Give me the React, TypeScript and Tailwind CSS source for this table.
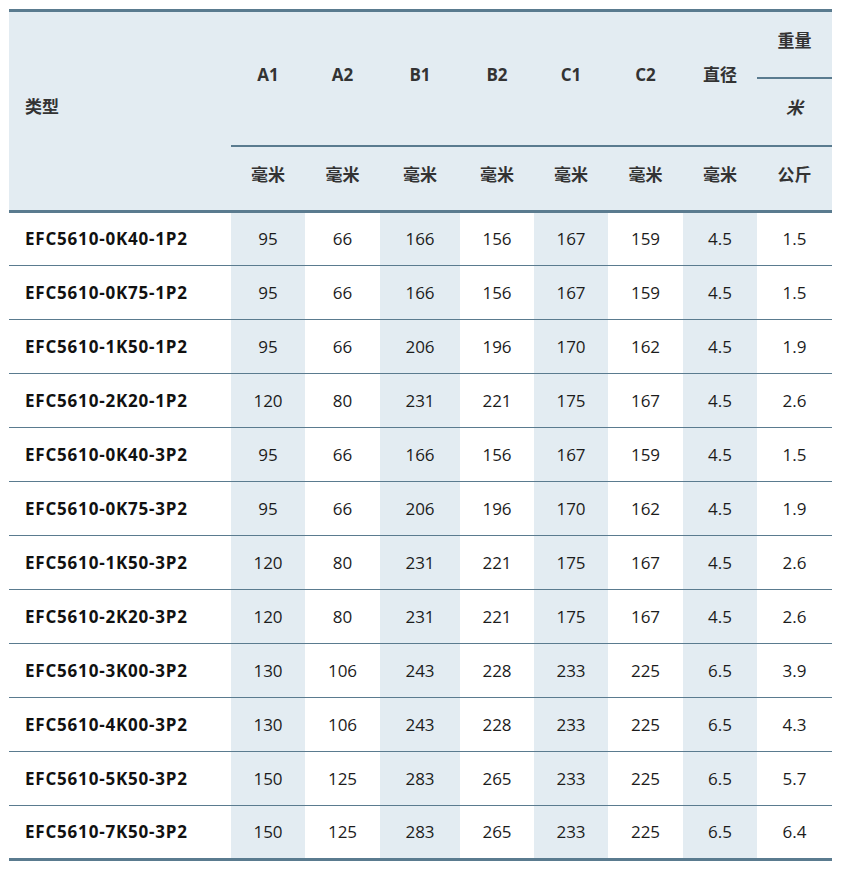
import React from 'react';

const rows: string[][] = [
  ['EFC5610-0K40-1P2', '95', '66', '166', '156', '167', '159', '4.5', '1.5'],
  ['EFC5610-0K75-1P2', '95', '66', '166', '156', '167', '159', '4.5', '1.5'],
  ['EFC5610-1K50-1P2', '95', '66', '206', '196', '170', '162', '4.5', '1.9'],
  ['EFC5610-2K20-1P2', '120', '80', '231', '221', '175', '167', '4.5', '2.6'],
  ['EFC5610-0K40-3P2', '95', '66', '166', '156', '167', '159', '4.5', '1.5'],
  ['EFC5610-0K75-3P2', '95', '66', '206', '196', '170', '162', '4.5', '1.9'],
  ['EFC5610-1K50-3P2', '120', '80', '231', '221', '175', '167', '4.5', '2.6'],
  ['EFC5610-2K20-3P2', '120', '80', '231', '221', '175', '167', '4.5', '2.6'],
  ['EFC5610-3K00-3P2', '130', '106', '243', '228', '233', '225', '6.5', '3.9'],
  ['EFC5610-4K00-3P2', '130', '106', '243', '228', '233', '225', '6.5', '4.3'],
  ['EFC5610-5K50-3P2', '150', '125', '283', '265', '233', '225', '6.5', '5.7'],
  ['EFC5610-7K50-3P2', '150', '125', '283', '265', '233', '225', '6.5', '6.4'],
];

const dimHeads = ['A1', 'A2', 'B1', 'B2', 'C1', 'C2', '直径'];
// shaded columns in the body (A1, B1, C1, 直径)
const shaded = [false, true, false, true, false, true, false, true, false];

export default function App() {
  return (
    <div className="bg-white min-h-screen pt-[9px] pl-[9px] font-['Open_Sans','Noto_Sans_CJK_SC',sans-serif] text-[17px]">
      <table className="w-[823px] table-fixed border-collapse border-t-[3px] border-b-[3px] border-[#5a7b8f]">
        <colgroup>
          <col className="w-[222px]" />
          <col className="w-[74px]" />
          <col className="w-[75px]" />
          <col className="w-[80px]" />
          <col className="w-[74px]" />
          <col className="w-[74px]" />
          <col className="w-[75px]" />
          <col className="w-[74px]" />
          <col className="w-[75px]" />
        </colgroup>
        <thead className="bg-[#e3ecf2] text-[#333] font-bold">
          <tr className="h-[67px]">
            <th rowSpan={3} className="text-left pl-4 pb-2 align-middle">
              类型
            </th>
            {dimHeads.map((h) => (
              <th key={h} rowSpan={2} className="align-middle pb-2">
                {h}
              </th>
            ))}
            <th className="border-b-2 border-[#5a7b8f] pb-2">重量</th>
          </tr>
          <tr className="h-[68px]">
            <th className="italic pb-2">米</th>
          </tr>
          <tr className="h-[66px]">
            {['毫米', '毫米', '毫米', '毫米', '毫米', '毫米', '毫米', '公斤'].map((u, i) => (
              <th key={i} className="border-t-2 border-b-[3px] border-[#5a7b8f] pb-2">
                {u}
              </th>
            ))}
          </tr>
        </thead>
        <tbody className="text-[#1c1c1c]">
          {rows.map((r, ri) => (
            <tr key={ri} className={`h-[54px] ${ri > 0 ? 'border-t border-[#5a7b8f]' : 'border-t-[3px] border-[#5a7b8f]'}`}>
              {r.map((v, ci) => (
                <td
                  key={ci}
                  className={
                    ci === 0
                      ? 'pl-4 font-bold tracking-[0.8px] text-[#111]'
                      : `text-center ${shaded[ci] ? 'bg-[#e3ecf2]' : ''}`
                  }
                >
                  {v}
                </td>
              ))}
            </tr>
          ))}
        </tbody>
      </table>
    </div>
  );
}
